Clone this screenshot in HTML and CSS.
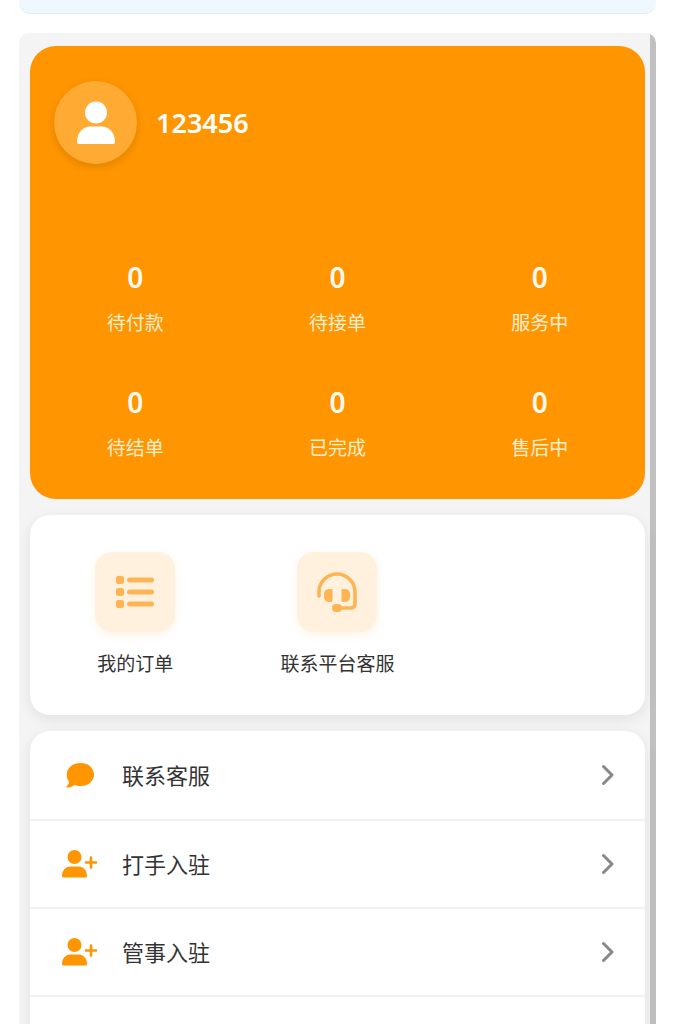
FILE: index.html
```html
<!DOCTYPE html>
<html lang="zh-CN">
<head>
<meta charset="utf-8">
<meta name="viewport" content="width=device-width, initial-scale=1">
<title>个人中心</title>
<link rel="stylesheet" href="styles.css">
</head>
<body>
<svg class="sprite" aria-hidden="true">
  <symbol id="user-plus" viewBox="0 0 36 28">
    <circle cx="12.500" cy="7" r="7"/>
    <path d="M0 26 C0 19.500 4.500 16.500 8.500 16.500 H16.500 C20.500 16.500 25 19.500 25 26 Q25 27.500 23.500 27.500 H1.500 Q0 27.500 0 26 Z"/>
    <path d="M29 7.500 V17.500 M24 12.500 H34" fill="none" stroke="currentColor" stroke-width="2.600" stroke-linecap="round"/>
  </symbol>
  <symbol id="chevron" viewBox="0 0 14 22">
    <path d="M2.500 2.500 L11 11 L2.500 19.500" fill="none" stroke="currentColor" stroke-width="3" stroke-linecap="round" stroke-linejoin="round"/>
  </symbol>
</svg>
<div class="previous"></div>
<main class="screen">
  <section class="profile">
    <div class="user">
      <div class="avatar">
        <svg viewBox="0 0 38 44" width="38" height="44"><circle cx="19" cy="11.500" r="11"/><path d="M0 41 C0 31 6.500 25.500 13.500 25.500 H24.500 C31.500 25.500 38 31 38 41 Q38 43 36 43 H2 Q0 43 0 41 Z"/></svg>
      </div>
      <h1 class="name">123456</h1>
    </div>
    <ul class="stats">
      <li class="stat"><strong class="count">0</strong><span class="caption">待付款</span></li>
      <li class="stat"><strong class="count">0</strong><span class="caption">待接单</span></li>
      <li class="stat"><strong class="count">0</strong><span class="caption">服务中</span></li>
      <li class="stat"><strong class="count">0</strong><span class="caption">待结单</span></li>
      <li class="stat"><strong class="count">0</strong><span class="caption">已完成</span></li>
      <li class="stat"><strong class="count">0</strong><span class="caption">售后中</span></li>
    </ul>
  </section>
  <section class="card tools">
    <button class="tool" type="button">
      <span class="tile"><svg viewBox="0 0 40 34" width="40" height="34"><rect x="1" y="1" width="8" height="8" rx="2.200"/><rect x="1" y="13" width="8" height="8" rx="2.200"/><rect x="1" y="25" width="8" height="8" rx="2.200"/><rect x="12" y="2.500" width="27" height="5" rx="2.500"/><rect x="12" y="14.500" width="27" height="5" rx="2.500"/><rect x="12" y="26.500" width="27" height="5" rx="2.500"/></svg></span>
      <span class="tool-label">我的订单</span>
    </button>
    <button class="tool" type="button">
      <span class="tile"><svg viewBox="0 0 40 40" width="40" height="40"><path d="M2 24 V20 A18 18 0 0 1 38 20 V31.500 Q38 36 33.500 36 H20" fill="none" stroke="currentColor" stroke-width="3.600" stroke-linecap="round"/><path d="M15.500 17.500 V28.500 Q15.500 30 14 30 H12.500 Q7 30 7 25 V22 Q7 17 12.500 17 H14 Q15.500 17 15.500 17.500 Z"/><path d="M24.500 17.500 V28.500 Q24.500 30 26 30 H27.500 Q33 30 33 25 V22 Q33 17 27.500 17 H26 Q24.500 17 24.500 17.500 Z"/><rect x="15" y="32" width="10" height="8" rx="4"/></svg></span>
      <span class="tool-label">联系平台客服</span>
    </button>
  </section>
  <nav class="card menu">
    <a class="row" href="#"><span class="icon"><svg viewBox="0 0 28 26" width="28" height="26"><path d="M14.500 1 C22 1 28 5.800 28 12.500 S22 24 14.500 24 C12.300 24 10.200 23.600 8.400 22.900 C6.500 24.500 3.800 25.500 1 25.500 Q0 25.300 0.600 24.400 C2 22.900 2.900 21.500 3 19.700 C1.500 17.800 .7 15.500 .7 12.500 C.7 5.800 7 1 14.500 1 Z"/></svg></span><span class="title">联系客服</span><svg class="chevron" width="14" height="22"><use href="#chevron"/></svg></a>
    <a class="row" href="#"><span class="icon"><svg width="36" height="28"><use href="#user-plus"/></svg></span><span class="title">打手入驻</span><svg class="chevron" width="14" height="22"><use href="#chevron"/></svg></a>
    <a class="row" href="#"><span class="icon"><svg width="36" height="28"><use href="#user-plus"/></svg></span><span class="title">管事入驻</span><svg class="chevron" width="14" height="22"><use href="#chevron"/></svg></a>
    <div class="rest"></div>
  </nav>
</main>
</body>
</html>
```
FILE: styles.css
```css
* { box-sizing: border-box; }
html, body { height: 100%; }
body {
  margin: 0;
  padding: 0 19px;
  display: flex;
  flex-direction: column;
  gap: 19px;
  overflow: hidden;
  background: #fff;
  color: #333;
  font-family: "Noto Sans", "Noto Sans CJK SC", sans-serif;
}
svg { display: block; fill: currentColor; }
.sprite { position: absolute; width: 0; height: 0; }
.previous {
  flex: none;
  height: 14px;
  background: #f0f8ff;
  border-bottom: 1px solid #e3ebf0;
  border-radius: 0 0 12px 12px;
}
.screen {
  flex: 1;
  min-height: 0;
  overflow: hidden;
  display: flex;
  flex-direction: column;
  gap: 16px;
  padding: 13px 11px 0 11px;
  background: linear-gradient(#c0c0c0, #c0c0c0) right / 6px 100% no-repeat #f4f4f4;
  border-radius: 10px 10px 0 0;
}
.profile {
  flex: none;
  padding: 35px 4px 37px;
  border-radius: 26px;
  background: #ff9500;
  color: #fff;
}
.user {
  display: flex;
  align-items: center;
  gap: 19px;
  padding: 0 20px;
}
.avatar {
  display: flex;
  align-items: center;
  justify-content: center;
  width: 83px;
  height: 83px;
  border-radius: 50%;
  background: #ffaa33;
  box-shadow: 0 3px 8px rgba(0, 0, 0, .12);
}
.name {
  margin: 0;
  font-size: 27px;
  font-weight: 600;
  line-height: 40px;
}
.stats {
  display: grid;
  grid-template-columns: repeat(3, 1fr);
  row-gap: 45px;
  margin: 93px 0 0;
  padding: 0;
  list-style: none;
}
.stat {
  display: flex;
  flex-direction: column;
  align-items: center;
  gap: 12px;
}
.count {
  font-size: 28px;
  font-weight: 600;
  line-height: 40px;
  color: #fffaf0;
}
.caption {
  font-size: 19px;
  line-height: 28px;
  color: #ffefd0;
}
.card {
  flex: none;
  border-radius: 20px;
  background: #fff;
  box-shadow: 0 4px 14px rgba(0, 0, 0, .08);
}
.tools {
  display: grid;
  grid-template-columns: repeat(3, 1fr);
  padding: 37px 4px;
}
.tool {
  display: flex;
  flex-direction: column;
  align-items: center;
  gap: 18px;
  padding: 0;
  border: 0;
  background: none;
  color: inherit;
  font: inherit;
}
.tile {
  display: flex;
  align-items: center;
  justify-content: center;
  width: 80px;
  height: 80px;
  border-radius: 17px;
  background: #fff1de;
  color: #ffb454;
  box-shadow: 0 3px 8px rgba(255, 149, 0, .1);
}
.tool-label {
  font-size: 19px;
  line-height: 28px;
}
.menu { overflow: hidden; }
.row {
  display: flex;
  align-items: center;
  height: 88px;
  padding: 0 30px 0 32px;
  border-bottom: 2px solid #f2f2f2;
  color: inherit;
  text-decoration: none;
}
.row:first-child { height: 90px; }
.icon {
  display: flex;
  justify-content: center;
  width: 36px;
  color: #ff9500;
}
.title {
  flex: 1;
  margin-left: 24px;
  font-size: 22px;
  line-height: 32px;
}
.chevron { color: #888; }
.rest { height: 88px; }
```
